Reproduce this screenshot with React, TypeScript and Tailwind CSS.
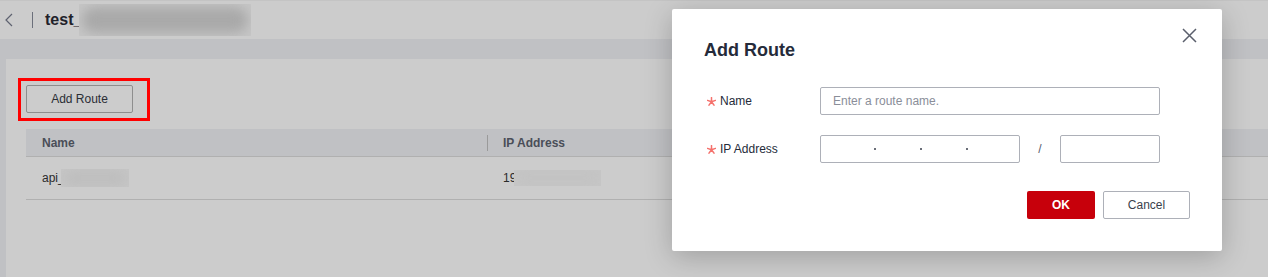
import React from "react";

function Blur({ w, h, dark, className = "" }: { w: number; h: number; dark: string; className?: string }) {
  return (
    <div
      className={"relative overflow-hidden bg-[#c6c6c6] " + className}
      style={{ width: w, height: h }}
    >
      <div
        className="absolute inset-[3px] rounded-full blur-[6px]"
        style={{ background: dark }}
      />
    </div>
  );
}

function Star() {
  return (
    <svg
      width="9"
      height="9"
      viewBox="0 0 9 9"
      className="mr-[4px]"
      fill="none"
      stroke="#f5716c"
      strokeWidth="1.5"
      strokeLinecap="round"
    >
      <path d="M4.5 4.7 L4.5 0.6 M4.5 4.7 L8.5 3.4 M4.5 4.7 L7 8.1 M4.5 4.7 L2 8.1 M4.5 4.7 L0.5 3.4" />
    </svg>
  );
}

export default function App() {
  return (
    <div className="relative w-[1268px] h-[277px] overflow-hidden bg-[#cccccc] font-['Liberation_Sans',Arial,sans-serif]">
      {/* Header */}
      <div className="h-[39px] flex items-center border-t border-[#c4c4c4]">
        <svg
          width="10"
          height="14"
          viewBox="0 0 10 14"
          className="ml-[4px]"
          fill="none"
          stroke="#5e6270"
          strokeWidth="1.2"
        >
          <path d="M8 1 L2 7 L8 13" />
        </svg>
        <div className="ml-[18px] h-[16px] w-px bg-[#6b6f7a]" />
        <span className="ml-[12px] text-[16px] font-bold text-[#1f222a]">
          test_
        </span>
        <Blur w={172} h={32} dark="#a9a9a9" className="-ml-[3px]" />
      </div>
      {/* band */}
      <div className="h-[20px] bg-[#c0c1c4]" />
      <div className="flex h-[218px]">
        <div className="w-[6px] bg-[#c0c1c4]" />
        <div className="flex-1 pl-[20px] pt-[26px]">
          <div className="relative w-[107px]">
            <div className="absolute left-[-8px] top-[-7px] w-[132px] h-[43px] border-[3px] border-[#ff0000]" />
            <button className="w-[107px] h-[28px] rounded-[2px] border border-[#8e8e8e] text-[12px] text-[#2a2d35]">
              Add Route
            </button>
          </div>
          <div className="mt-[16px]">
            <div className="h-[28px] flex items-center bg-[#c0c1c4] border-b border-[#b0b0b0] text-[12px] font-bold text-[#4a4e58]">
              <div className="w-[461px] pl-[16px]">Name</div>
              <div className="h-[16px] w-px bg-[#9a9a9a]" />
              <div className="pl-[15px]">IP Address</div>
            </div>
            <div className="h-[43px] flex items-center border-b border-[#b0b0b0] text-[12px] text-[#2a2a2a]">
              <div className="w-[462px] pl-[16px] flex items-center">
                <span>api_</span>
                <Blur w={68} h={18} dark="#bcbcbc" className="-ml-[4px]" />
              </div>
              <div className="pl-[15px] flex items-center">
                <span>19</span>
                <Blur w={87} h={16} dark="#c2c2c2" className="-ml-[2px]" />
              </div>
            </div>
          </div>
        </div>
      </div>

      {/* Modal */}
      <div className="absolute left-[672px] top-[9px] w-[550px] h-[242px] bg-white rounded-[2px] shadow-[0_6px_28px_rgba(0,0,0,0.22)] px-[32px] pt-[29px]">
        <svg
          className="absolute top-[19px] right-[25px]"
          width="15"
          height="15"
          viewBox="0 0 15 15"
          fill="none"
          stroke="#5a5f6c"
          strokeWidth="1.5"
        >
          <path d="M1 1 L14 14 M14 1 L1 14" />
        </svg>
        <div className="text-[18px] leading-[24px] font-bold text-[#252b3a]">
          Add Route
        </div>
        <div className="mt-[25px] flex items-center h-[28px]">
          <div className="w-[116px] pl-[3px] flex items-center text-[12px] text-[#252b3a]">
            <Star />
            <span>Name</span>
          </div>
          <div className="w-[340px] h-[28px] rounded-[2px] border border-[#adb0b8] flex items-center pl-[12px] text-[12px] text-[#8a8e99]">
            Enter a route name.
          </div>
        </div>
        <div className="mt-[20px] flex items-center h-[28px]">
          <div className="w-[116px] pl-[3px] flex items-center text-[12px] text-[#252b3a]">
            <Star />
            <span>IP Address</span>
          </div>
          <div className="w-[200px] h-[28px] rounded-[2px] border border-[#adb0b8] flex items-center pl-[7px]">
            <div className="w-[46px]" />
            <div className="w-[2px] h-[2px] bg-[#6a6e78]" />
            <div className="w-[44px]" />
            <div className="w-[2px] h-[2px] bg-[#6a6e78]" />
            <div className="w-[44px]" />
            <div className="w-[2px] h-[2px] bg-[#6a6e78]" />
          </div>
          <div className="w-[40px] text-center text-[12px] text-[#575d6c]">/</div>
          <div className="w-[100px] h-[28px] rounded-[2px] border border-[#adb0b8]" />
        </div>
        <div className="mt-[28px] flex justify-end gap-[8px]">
          <button className="w-[68px] h-[28px] rounded-[2px] bg-[#c7000b] text-white text-[12px] font-bold">
            OK
          </button>
          <button className="w-[87px] h-[28px] rounded-[2px] border border-[#adb0b8] text-[12px] text-[#3a3f4c]">
            Cancel
          </button>
        </div>
      </div>
    </div>
  );
}
